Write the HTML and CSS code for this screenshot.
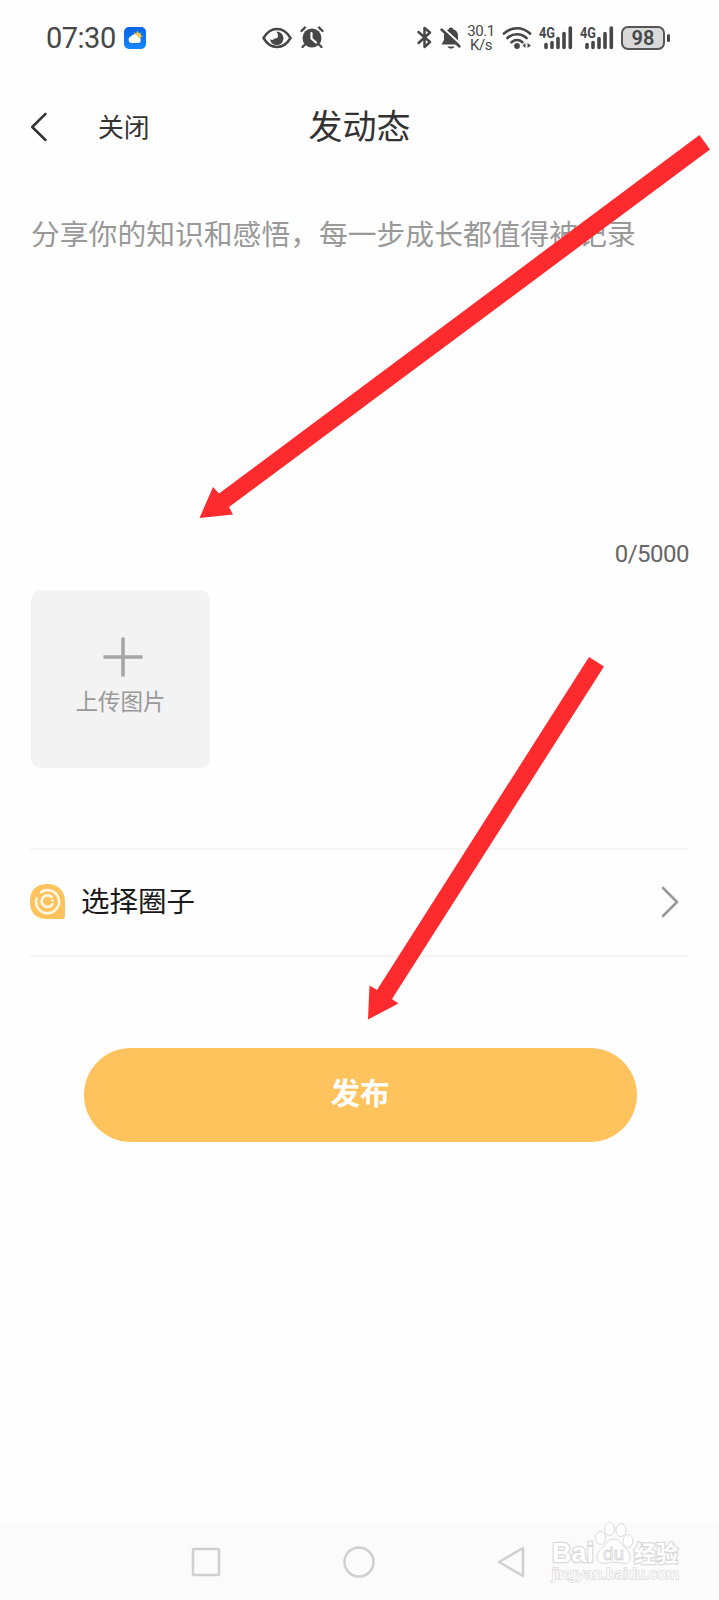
FILE: index.html
```html
<!DOCTYPE html>
<html lang="zh-CN">
<head>
<meta charset="utf-8">
<title>发动态</title>
<link rel="stylesheet" href="styles.css">
</head>
<body>
<div class="screen">
  <div class="status">
    <span class="clock">07:30</span>
    <svg class="weather" width="22" height="22" viewBox="0 0 22 22">
      <defs><linearGradient id="sky" x1="0" y1="0" x2="0" y2="1"><stop offset="0" stop-color="#0764e6"/><stop offset="1" stop-color="#1687fa"/></linearGradient></defs>
      <rect width="22" height="22" rx="5" fill="url(#sky)"/>
      <path d="M13.500 4v10M9 9h9.500M10 5.500l7 7M17 5.500l-7 7" stroke="#d9bd58" stroke-width="1"/>
      <circle cx="13.500" cy="9" r="3.600" fill="#f5c84c"/>
      <path d="M7 16a3.400 3.400 0 0 1-.2-6.500 4.200 4.200 0 0 1 7.600 1.200A2.800 2.800 0 0 1 15 16z" fill="#fff"/>
    </svg>
    <svg class="eye" width="30" height="22" viewBox="0 0 30 22">
      <path d="M1.500 11C5 5 10 2 15 2s10 3 13.500 9C25 17 20 20 15 20S5 17 1.500 11z" fill="none" stroke="#474747" stroke-width="2.500"/>
      <path d="M14.500 4.500A6.800 6.800 0 1 1 8 12.200c2 1.300 4 .7 4.400-1 1.600.8 3.600-.2 3.600-2.200 0-1.800-.5-2.700-1.500-4.500z" fill="#474747"/>
    </svg>
    <svg class="alarm" width="24" height="23" viewBox="0 0 24 23">
      <circle cx="12" cy="12" r="9.500" fill="#474747"/>
      <path d="M1.500 5l3.500-3.500M19 1.500L22.500 5M5 18.500L2.500 21M19 18.500l2.500 2.500" stroke="#474747" stroke-width="2.400" stroke-linecap="round"/>
      <path d="M11.500 7v5.500l4.500 4" fill="none" stroke="#fff" stroke-width="2.200" stroke-linecap="round"/>
    </svg>
    <svg class="bluetooth" width="15" height="23" viewBox="0 0 15 23">
      <path d="M1.500 6l11.500 10-5.500 5V2l5.500 4.500L1.500 17" fill="none" stroke="#474747" stroke-width="2.500" stroke-linejoin="round" stroke-linecap="round"/>
    </svg>
    <svg class="bell" width="22" height="24" viewBox="0 0 22 24">
      <path d="M11 1.500c1.600 0 2 .8 2.200 1.800 3.300 1 4.800 3.400 4.800 6.700v4l2.500 4.500h-19L4 14v-4c0-3.300 1.500-5.700 4.800-6.700.2-1 .6-1.800 2.200-1.800zM7.500 20.500h7c-1 2.700-6 2.700-7 0z" fill="#474747"/>
      <path d="M2.500 1.500l18.500 17" stroke="#fff" stroke-width="2"/>
      <path d="M1.500 3.500l18 17" stroke="#474747" stroke-width="2.500" stroke-linecap="round"/>
    </svg>
    <span class="speed"><span>30.1</span><span>K/s</span></span>
    <svg class="wifi" width="30" height="24" viewBox="0 0 30 24">
      <g fill="none" stroke="#474747" stroke-width="2.700" stroke-linecap="round"><path d="M2 7.500c7.500-7 18.500-7 26 0"/><path d="M5.500 12c5.500-5 13.500-5 19 0"/><path d="M9.500 16.200c3.300-2.700 7.700-2.700 11 0"/></g>
      <circle cx="15" cy="20" r="2.900" fill="#474747"/>
      <path d="M23.500 17v5l-3-2.500zM25.500 17v5l3.500-2.500z" fill="#474747"/>
    </svg>
    <svg class="signal" width="34" height="24" viewBox="0 0 34 24">
      <text x="0" y="11.500" class="network" textLength="16" lengthAdjust="spacingAndGlyphs">4G</text>
      <path d="M7 18.500v3M13 16.500v5M19 12.500v9M25 7.500v14M31.300 2v19.500" stroke="#474747" stroke-width="3.600" stroke-linecap="round"/>
    </svg>
    <svg class="signal" width="34" height="24" viewBox="0 0 34 24">
      <text x="0" y="11.500" class="network" textLength="16" lengthAdjust="spacingAndGlyphs">4G</text>
      <path d="M7 18.500v3M13 16.500v5M19 12.500v9M25 7.500v14M31.300 2v19.500" stroke="#474747" stroke-width="3.600" stroke-linecap="round"/>
    </svg>
    <span class="battery">98</span><span class="battery-tip"></span>
  </div>

  <header class="header">
    <div class="header-left">
      <svg width="17" height="30" viewBox="0 0 17 30"><path d="M14.500 1.800L1.200 15l13.300 13" fill="none" stroke="#333" stroke-width="2.500" stroke-linecap="round" stroke-linejoin="round"/></svg>
      <span class="close">关闭</span>
    </div>
    <h1 class="title">发动态</h1>
  </header>

  <main class="compose">
    <div class="editor">分享你的知识和感悟&#xFF0C;每一步成长都值得被记录</div>
    <div class="counter">0/5000</div>
    <div class="upload">
      <svg width="40" height="40" viewBox="0 0 40 40"><path d="M20 .5v39M.5 20h39" stroke="#a6a6a6" stroke-width="3.600"/></svg>
      <span>上传图片</span>
    </div>
    <div class="circle-row">
      <svg width="35" height="35" viewBox="0 0 35 35">
        <path d="M17.500 0C28 0 35 7 35 17.500V32a3 3 0 0 1-3 3H17.500C5 35 0 28 0 17.500S5 0 17.500 0z" fill="#ffc35d"/>
        <g fill="none" stroke="#fff8e8" stroke-linecap="round"><path d="M6.500 14.500A11.500 11.500 0 1 0 11 8.200" stroke-width="2.500"/><path d="M21.500 13A5.800 5.800 0 1 0 22.500 20" stroke-width="2.600"/></g>
        <circle cx="22.500" cy="16.500" r="1.300" fill="#fff8e8"/>
      </svg>
      <span class="circle-label">选择圈子</span>
      <svg width="18" height="32" viewBox="0 0 18 32"><path d="M2 2l14 14L2 30" fill="none" stroke="#999" stroke-width="2.700" stroke-linecap="round" stroke-linejoin="round"/></svg>
    </div>
    <button class="publish">发布</button>
  </main>

  <nav class="nav">
    <svg width="30" height="30" viewBox="0 0 30 30"><rect x="2" y="2" width="26" height="26" rx="1" class="key"/></svg>
    <svg width="32" height="32" viewBox="0 0 32 32"><circle cx="16" cy="16" r="14.500" class="key"/></svg>
    <svg width="29" height="32" viewBox="0 0 29 32"><path d="M26 2v28L2 16z" class="key"/></svg>
  </nav>

  <svg class="watermark" width="136" height="70" viewBox="0 0 136 70">
    <g class="mark">
      <text x="2" y="32" font-size="28" class="outlined" textLength="42" lengthAdjust="spacingAndGlyphs">Bai</text>
      <path d="M64 9c5 0 7 4 9 7 4 4 7 6 7 11 0 6-4 7-8 6-5-1-11-1-16 0-5 1-9-1-9-6s4-7 7-11c3-4 5-7 10-7z"/>
      <ellipse cx="50.500" cy="8" rx="5" ry="6.500"/><ellipse cx="59.500" cy="-1" rx="5" ry="6.500"/><ellipse cx="71" cy="0" rx="5" ry="6.500"/><ellipse cx="78" cy="11" rx="5" ry="6.500"/>
      <text x="53" y="29.500" font-size="19" textLength="21" lengthAdjust="spacingAndGlyphs">du</text>
      <text x="84" y="32" font-size="23" class="outlined" textLength="44" lengthAdjust="spacingAndGlyphs">经验</text>
      <text x="2" y="49" font-size="15" class="outlined site" textLength="127" lengthAdjust="spacingAndGlyphs">jingyan.baidu.com</text>
    </g>
  </svg>

  <svg class="arrows" width="719" height="1600" viewBox="0 0 719 1600">
    <path d="M699.500 135L710 149.500L229 507L233 514.500L199.500 518L213 487L219 493.500z"/>
    <path d="M589 657L604 666.500L392 999L398.500 1003.500L368 1019.500L369.500 985.500L377 990z"/>
  </svg>
</div>
</body>
</html>
```
FILE: styles.css
```css
* { box-sizing: border-box; }
body { margin: 0; background: #fefefe; font-family: "Noto Sans CJK SC", sans-serif; }
svg { display: block; flex: none; overflow: visible; }
.screen { position: relative; width: 719px; height: 1600px; display: flex; flex-direction: column; overflow: hidden; }

.status { height: 75px; padding-left: 46px; display: flex; align-items: center; color: #474747; font-family: Roboto, sans-serif; }
.clock { width: 77px; font-size: 29px; line-height: 34px; letter-spacing: -.5px; padding-top: 1px; }
.weather { margin-left: 1px; }
.eye { margin-left: 116px; }
.alarm { margin-left: 8px; }
.bluetooth { margin-left: 93px; }
.bell { margin-left: 8px; }
.speed { width: 28px; margin-left: 5px; display: flex; flex-direction: column; align-items: center; font-size: 15px; line-height: 14px; letter-spacing: -.4px; white-space: nowrap; }
.wifi { margin-left: 7px; }
.signal { margin-left: 7px; }
.network { font: 700 14px Roboto, sans-serif; fill: #474747; }
.battery { width: 44px; height: 24px; margin-left: 7px; border: 2px solid #555; border-radius: 7px; background: #d9d9d9; font-size: 20px; font-weight: 600; line-height: 20px; text-align: center; }
.battery-tip { width: 3px; height: 8px; margin-left: 2px; border-radius: 2px; background: #474747; }

.header { height: 103px; padding: 0 31px; display: grid; grid-template-columns: 1fr auto 1fr; align-items: center; color: #333; }
.header-left { display: flex; align-items: center; }
.close { margin-left: 50px; padding-bottom: 1px; font-size: 25.800px; line-height: 36px; }
.title { margin: 0; padding-bottom: 3px; font-size: 34px; line-height: 48px; font-weight: 400; }

.compose { flex: 1; padding: 0 30px; display: flex; flex-direction: column; }
.editor { height: 361px; padding: 34px 0 0 1px; color: #999; font-size: 28.800px; line-height: 42px; white-space: nowrap; }
.counter { height: 51px; color: #666; font-family: Roboto, sans-serif; font-size: 24px; line-height: 31px; letter-spacing: -.5px; text-align: right; }
.upload { width: 179px; height: 178px; margin-left: .5px; padding: 47px 0 0; border-radius: 10px; background: #f3f3f3; color: #999; display: flex; flex-direction: column; align-items: center; font-size: 22.500px; line-height: 34px; }
.upload svg { margin-left: 5px; }
.upload span { margin: 6px 0 0 1px; }
.circle-row { height: 109px; margin-top: 80px; border-top: 2px solid #f5f5f5; border-bottom: 2px solid #f5f5f5; padding: 0 10px 2px 0; display: flex; align-items: center; }
.circle-label { flex: 1; margin-left: 16px; padding-bottom: 4px; color: #1a1a1a; font-size: 28.500px; line-height: 42px; }
.publish { width: 553px; height: 94px; margin: 91px 0 0 53.500px; padding: 0 0 8px; border: 0; border-radius: 47px; background: #ffc35d; color: #fff; font: 700 29.500px "Noto Sans CJK SC", sans-serif; }

.nav { height: 77px; padding: 1px 193px 0 191px; background: #fbfbfb; display: flex; align-items: center; justify-content: space-between; }
.key { fill: none; stroke: #d0d0d0; stroke-width: 2.500px; stroke-linejoin: round; }
.watermark { position: absolute; left: 550px; top: 1530px; }
.mark { fill: #fff; stroke: #dadada; stroke-width: 1px; font-family: "Liberation Sans", "Noto Sans CJK SC", sans-serif; }
.outlined { stroke-width: 2.500px; paint-order: stroke; font-weight: 700; }
.site { stroke-width: 1.400px; font-weight: 400; }
.arrows { position: absolute; left: 0; top: 0; fill: #fe2b2e; pointer-events: none; }
```
